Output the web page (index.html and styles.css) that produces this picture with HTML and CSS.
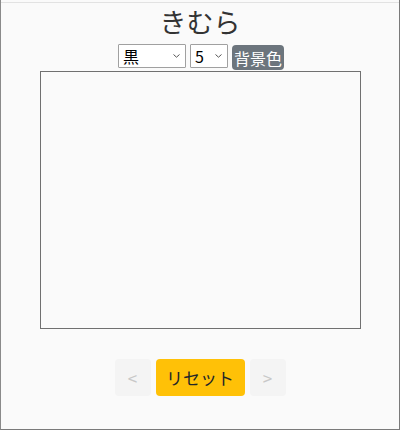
FILE: index.html
```html
<!DOCTYPE html>
<html lang="ja">
<head>
<meta charset="utf-8">
<link rel="stylesheet" href="styles.css">
</head>
<body>
<div class="frame">
  <div class="topline"></div>
  <h1 class="title">きむら</h1>
  <div class="controls">
    <select class="sel sel-color"><option>黒</option></select>
    <select class="sel sel-size"><option>5</option></select>
    <button class="bg-btn">背景色</button>
  </div>
  <div class="canvas-wrap"><div class="canvas"></div></div>
  <div class="actions">
    <button class="nav">&lt;</button>
    <button class="reset">リセット</button>
    <button class="nav">&gt;</button>
  </div>
</div>
</body>
</html>
```

FILE: styles.css
```css
html, body {
  margin: 0;
  padding: 0;
  background: #fafafa;
}
body {
  font-family: "Noto Sans CJK JP", "Noto Sans", sans-serif;
  color: #212529;
}
.frame {
  box-sizing: border-box;
  width: 400px;
  height: 430px;
  border-left: 1px solid #8a8a8a;
  border-right: 1px solid #7a7a7a;
  border-bottom: 1px solid #7a7a7a;
  display: flex;
  flex-direction: column;
  align-items: center;
}
.topline {
  align-self: stretch;
  height: 0;
  margin-top: 2px;
  border-top: 1px solid #e2e2e2;
}
.title {
  margin: 0;
  font-weight: 400;
  font-size: 27px;
  line-height: 38px;
  color: #333;
  text-align: center;
}
.controls {
  display: flex;
  align-items: flex-start;
  gap: 4px;
  margin-top: 3px;
  margin-left: 2px;
}
.sel {
  -webkit-appearance: none;
  appearance: none;
  box-sizing: border-box;
  font-family: "Noto Sans CJK JP", "Noto Sans", sans-serif;
  font-size: 16px;
  line-height: 22px;
  height: 24px;
  padding: 0 0 0 4px;
  border: 1px solid #a0a0a0;
  border-radius: 1px;
  background-color: #fff;
  background-image: url("data:image/svg+xml,%3Csvg xmlns='http://www.w3.org/2000/svg' width='7' height='4' viewBox='0 0 7 4'%3E%3Cpath d='M0.5 0.5 L3.5 3.2 L6.5 0.5' fill='none' stroke='%23555' stroke-width='1'/%3E%3C/svg%3E");
  background-repeat: no-repeat;
  background-position: right 5px center;
  color: #000;
}
.sel-color { width: 68px; }
.sel-size { width: 38px; }
.bg-btn {
  font-family: "Noto Sans CJK JP", "Noto Sans", sans-serif;
  font-size: 16px;
  line-height: 24px;
  height: 25px;
  padding: 0 2px;
  border: none;
  border-radius: 4px;
  background: #6c757d;
  color: #fff;
  margin-top: 1px;
}
.canvas-wrap {
  margin-top: 1px;
  margin-left: 1px;
}
.canvas {
  width: 319px;
  height: 256px;
  border: 1px solid #707070;
  background: #fafafa;
}
.actions {
  display: flex;
  gap: 5px;
  margin-top: 30px;
}
.actions button {
  font-family: "Noto Sans CJK JP", "Noto Sans", sans-serif;
  height: 37px;
  border: none;
  border-radius: 4px;
  font-size: 17px;
}
.nav {
  width: 36px;
  background: #f4f4f4;
  color: #c8c8c8;
  font-size: 14px;
}
.reset {
  width: 89px;
  background: #ffc107;
  color: #212529;
}
```
